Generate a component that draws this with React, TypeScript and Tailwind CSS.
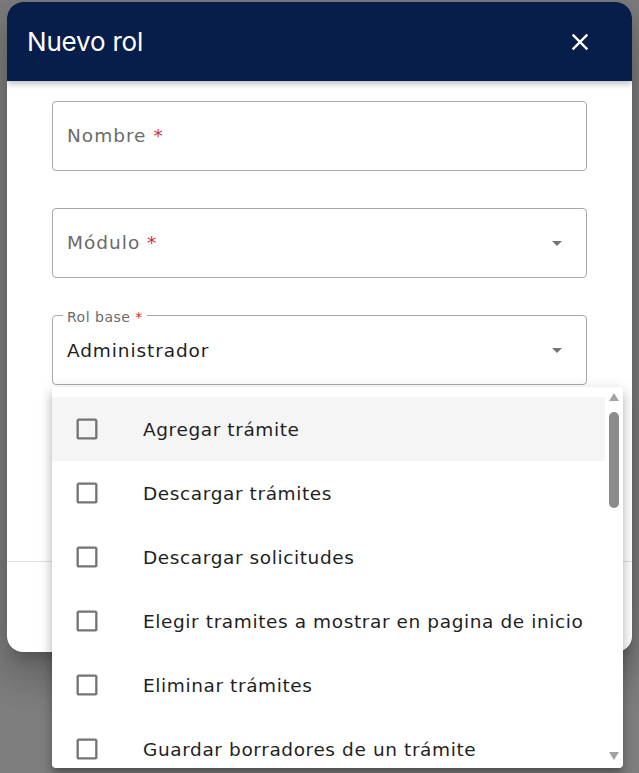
import React from "react";

const items = [
  "Agregar trámite",
  "Descargar trámites",
  "Descargar solicitudes",
  "Elegir tramites a mostrar en pagina de inicio",
  "Eliminar trámites",
  "Guardar borradores de un trámite",
];

function Caret() {
  return (
    <svg width="24" height="24" viewBox="0 0 24 24" className="text-[#757575]">
      <path d="M7 10l5 5 5-5z" fill="currentColor" />
    </svg>
  );
}

function CheckBlank() {
  return (
    <svg width="28" height="28" viewBox="0 0 24 24" className="text-[#747474] shrink-0">
      <path
        fill="currentColor"
        d="M19 5v14H5V5h14m0-2H5c-1.1 0-2 .9-2 2v14c0 1.1.9 2 2 2h14c1.1 0 2-.9 2-2V5c0-1.1-.9-2-2-2z"
      />
    </svg>
  );
}

export default function App() {
  const body = { fontFamily: '"DejaVu Sans", "Open Sans", sans-serif' };
  return (
    <div
      className="relative w-[639px] h-[773px] overflow-hidden bg-[#7e7e7e]"
      style={body}
    >
      {/* dialog */}
      <div className="absolute left-[7px] top-[2px] w-[625px] h-[650px] rounded-2xl bg-white overflow-hidden flex flex-col shadow-[0_11px_15px_-7px_rgba(0,0,0,0.2),0_24px_38px_3px_rgba(0,0,0,0.14),0_9px_46px_8px_rgba(0,0,0,0.12)]">
        <div className="relative z-10 h-[79px] shrink-0 bg-[#071e4a] flex items-center justify-between pl-5 pr-[38px] shadow-[0_3px_6px_rgba(0,0,0,0.25)]">
          <span
            className="text-white text-[26px] leading-none tracking-[-0.2px]"
            style={{ fontFamily: "Inter, sans-serif" }}
          >
            Nuevo rol
          </span>
          <svg width="28" height="28" viewBox="0 0 24 24" className="text-white">
            <path
              fill="currentColor"
              d="M19 6.41 17.59 5 12 10.59 6.41 5 5 6.41 10.59 12 5 17.59 6.41 19 12 13.41 17.59 19 19 17.59 13.41 12z"
            />
          </svg>
        </div>
        <div className="h-[480px] shrink-0 px-[45px] pt-5 flex flex-col gap-[37px]">
          <div className="h-[70px] shrink-0 rounded border border-[#a8a8a8] flex items-center px-[14px] text-[18.5px] tracking-[1px] text-[#6b6b6b]">
            Nombre&nbsp;<span className="text-[#d32f2f]">*</span>
          </div>
          <div className="h-[70px] shrink-0 rounded border border-[#a8a8a8] flex items-center justify-between pl-[14px] pr-[17px] text-[18.5px] tracking-[1px] text-[#6b6b6b]">
            <span>
              Módulo&nbsp;<span className="text-[#d32f2f]">*</span>
            </span>
            <Caret />
          </div>
          <div className="relative h-[70px] shrink-0 rounded border border-[#a8a8a8] flex items-center justify-between pl-[14px] pr-[17px] text-[18.5px] tracking-[0.9px] text-[#1f1f1f]">
            <span className="absolute left-[10px] -top-[7px] bg-white px-[4px] text-[14px] tracking-[0.5px] leading-4 text-[#6b6b6b]">
              Rol base <span className="text-[#d32f2f]">*</span>
            </span>
            <span className="pt-[2px]">Administrador</span>
            <Caret />
          </div>
        </div>
        <div className="border-t border-[#e0e0e0] flex-1" />
      </div>

      {/* menu */}
      <div className="absolute left-[52px] top-[387px] w-[571px] h-[381px] bg-white rounded overflow-hidden shadow-[0_5px_5px_-3px_rgba(0,0,0,0.2),0_8px_10px_1px_rgba(0,0,0,0.14),0_3px_14px_2px_rgba(0,0,0,0.12)] flex">
        <div className="w-[553px] pt-[10px] flex flex-col">
          {items.map((t, i) => (
            <div
              key={t}
              className={
                "h-16 shrink-0 flex items-center pl-[21px] gap-[42px] text-[18.5px] tracking-[0.6px] text-[#1f1f1f] " +
                (i === 0 ? "bg-[#f5f5f5]" : "")
              }
            >
              <CheckBlank />
              <span className="whitespace-nowrap pt-[2px]">{t}</span>
            </div>
          ))}
        </div>
        <div className="w-[18px] flex flex-col items-center pt-[6px]">
          <svg width="10" height="8" viewBox="0 0 10 8">
            <path d="M5 0L10 8H0z" fill="#a3a3a3" />
          </svg>
          <div className="mt-[11px] w-[10px] h-[96px] rounded-full bg-[#8c8c8c]" />
          <div className="flex-1" />
          <svg width="10" height="8" viewBox="0 0 10 8" className="mb-[8px]">
            <path d="M0 0H10L5 8z" fill="#a3a3a3" />
          </svg>
        </div>
      </div>
    </div>
  );
}
